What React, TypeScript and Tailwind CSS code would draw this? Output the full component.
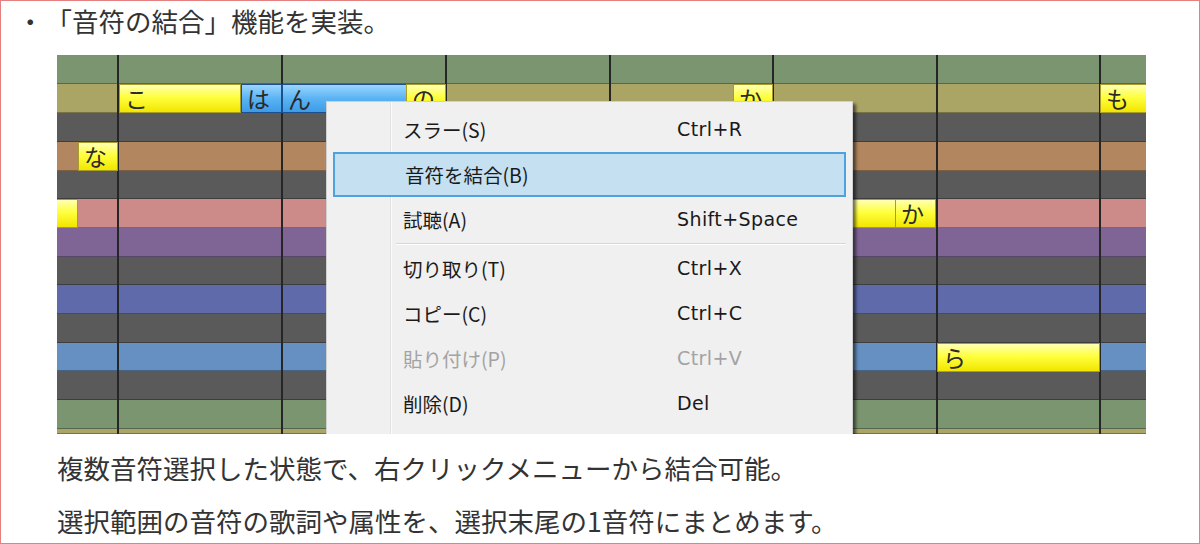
import React from "react";

// piano-roll lanes, top to bottom
const lanes = [
  { bg: "bg-[#7a956f]", h: "h-[29px]" },
  { bg: "bg-[#aba565]", h: "h-[29px]" },
  { bg: "bg-[#5a5a5a]", h: "h-[29px]" },
  { bg: "bg-[#b2875f]", h: "h-[29px]" },
  { bg: "bg-[#5a5a5a]", h: "h-[28px]" },
  { bg: "bg-[#cc8a88]", h: "h-[29px]" },
  { bg: "bg-[#7f6596]", h: "h-[29px]" },
  { bg: "bg-[#5a5a5a]", h: "h-[28px]" },
  { bg: "bg-[#5f6aaa]", h: "h-[29px]" },
  { bg: "bg-[#5a5a5a]", h: "h-[29px]" },
  { bg: "bg-[#6690c2]", h: "h-[28px]" },
  { bg: "bg-[#5a5a5a]", h: "h-[29px]" },
  { bg: "bg-[#7a956f]", h: "h-[29px]" },
  { bg: "bg-[#aba565]", h: "h-[5px]" },
];

// bar lines
const bars = ["left-[60px]", "left-[224px]", "left-[388px]", "left-[552px]", "left-[715px]", "left-[879px]", "left-[1042px]"];

type Note = { pos: string; text?: string; selected?: boolean };

const notes: Note[] = [
  { pos: "top-[29px] left-[62px] w-[122px]", text: "こ" },
  { pos: "top-[29px] left-[184px] w-[41px]", text: "は", selected: true },
  { pos: "top-[29px] left-[225px] w-[140px]", text: "ん", selected: true },
  { pos: "top-[29px] left-[349px] w-[40px]", text: "の" },
  { pos: "top-[29px] left-[676px] w-[40px]", text: "か" },
  { pos: "top-[29px] left-[1043px] w-[60px]", text: "も" },
  { pos: "top-[87px] left-[21px] w-[40px]", text: "な" },
  { pos: "top-[144px] left-[-6px] w-[27px]" },
  { pos: "top-[144px] left-[700px] w-[139px]" },
  { pos: "top-[144px] left-[838px] w-[41px]", text: "か" },
  { pos: "top-[288px] left-[880px] w-[163px]", text: "ら" },
];

type Item = { label: string; key?: string; active?: boolean; disabled?: boolean } | "sep";

const menu: Item[] = [
  { label: "スラー(S)", key: "Ctrl+R" },
  { label: "音符を結合(B)", active: true },
  { label: "試聴(A)", key: "Shift+Space" },
  "sep",
  { label: "切り取り(T)", key: "Ctrl+X" },
  { label: "コピー(C)", key: "Ctrl+C" },
  { label: "貼り付け(P)", key: "Ctrl+V", disabled: true },
  { label: "削除(D)", key: "Del" },
];

function ContextMenu() {
  return (
    <div className="absolute left-[269px] top-[46px] w-[527px] h-[360px] bg-[#f0f0f0] border border-[#d0d0d0] shadow-[3px_3px_3px_rgba(0,0,0,0.55)] pt-[5px] font-['DejaVu_Sans','Noto_Sans_CJK_JP',sans-serif] text-[19px] text-[#1a1a1a]">
      {/* icon gutter */}
      <div className="absolute left-[63px] top-0 bottom-0 w-[2px] border-l border-[#e2e2e2] bg-white/70" />
      <div className="relative flex flex-col">
        {menu.map((it, i) =>
          it === "sep" ? (
            <div key={i} className="h-[4px] flex items-center pl-[69px] pr-[6px]">
              <div className="h-[2px] w-full border-t border-[#d7d7d7] bg-white" />
            </div>
          ) : (
            <div
              key={i}
              className={
                "mx-[6px] h-[45px] flex items-center pl-[70px] " +
                (it.active ? "bg-[#c5e0f1] border-2 border-[#4ea2dd] pl-[68px]" : "") +
                (it.disabled ? " text-[#a3a3a3]" : "")
              }
            >
              <span className="w-[274px] font-['Noto_Sans_CJK_JP',sans-serif] text-[19.5px]">{it.label}</span>
              {it.key && <span className="tracking-[0.4px]">{it.key}</span>}
            </div>
          )
        )}
      </div>
    </div>
  );
}

function PianoRoll() {
  return (
    <div className="relative ml-[56px] mt-[16px] w-[1089px] h-[379px] overflow-hidden">
      <div className="flex flex-col">
        {lanes.map((l, i) => (
          <div key={i} className={`${l.bg} ${l.h} border-b border-black/30`} />
        ))}
      </div>
      {bars.map((b) => (
        <div key={b} className={`absolute top-0 bottom-0 w-[2px] bg-[#262626] ${b}`} />
      ))}
      {notes.map((n, i) => (
        <div
          key={i}
          className={
            `absolute h-[29px] flex items-center pl-[5px] text-[23px] leading-none text-[#2a2a2a] font-['Noto_Sans_CJK_JP',sans-serif] border ${n.pos} ` +
            (n.selected
              ? "bg-[linear-gradient(to_bottom,#9ad6ff,#5ab3f3_50%,#3c9ce6)] border-[#1d4f8c]"
              : "bg-[linear-gradient(to_bottom,#ffffb4,#ffff3e_45%,#f2e600)] border-[#a99c2a]")
          }
        >
          {n.text}
        </div>
      ))}
      <ContextMenu />
    </div>
  );
}

export default function App() {
  return (
    <div className="w-[1200px] h-[544px] border border-[#e58080] bg-white overflow-hidden text-[#333] font-['Noto_Sans_CJK_JP',sans-serif]">
      <div className="flex items-center pt-[1px] pl-[16px] text-[26.5px] leading-[37px]">
        <span className="w-[26.5px] text-center">・</span>
        <span className="ml-[2px]">「音符の結合」機能を実装。</span>
      </div>
      <PianoRoll />
      <div className="ml-[56px] mt-[7px] text-[26.5px] leading-[53px]">
        <p>複数音符選択した状態で、右クリックメニューから結合可能。</p>
        <p>選択範囲の音符の歌詞や属性を、選択末尾の1音符にまとめます。</p>
      </div>
    </div>
  );
}
